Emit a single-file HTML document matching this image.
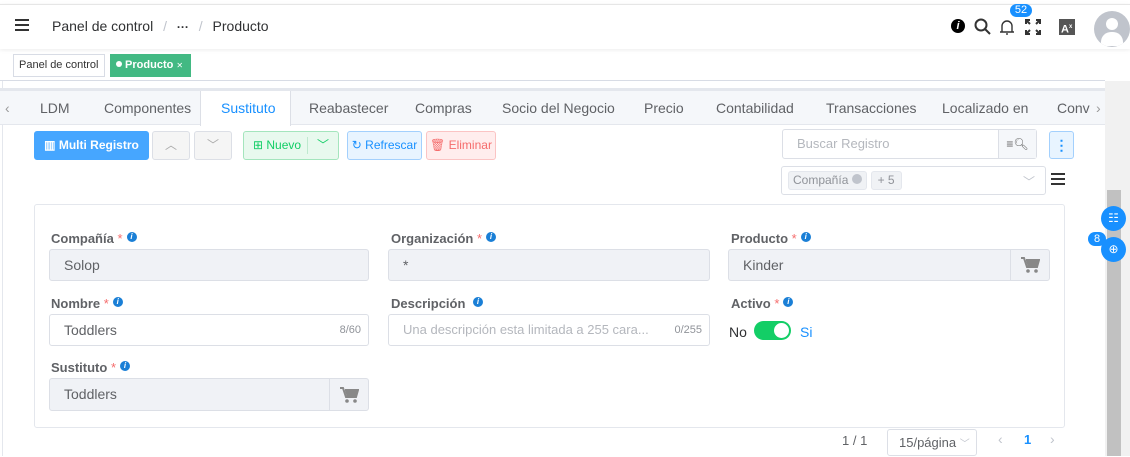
<!DOCTYPE html>
<html><head><meta charset="utf-8"><style>
*{box-sizing:border-box;margin:0;padding:0}
body{width:1130px;height:456px;overflow:hidden;background:#fff;font-family:"Liberation Sans",sans-serif;position:relative;color:#303133}
.a{position:absolute}
.hdr{top:4px;left:0;width:1130px;height:45px;border-top:1px solid #e6e6e6;box-shadow:0 1px 4px rgba(0,0,0,.08)}
.tag{height:23px;border:1px solid #d8dce5;font-size:12px;line-height:21px;padding:0 6px;white-space:nowrap;overflow:hidden}
.tabs{top:88px;left:0;width:1105px;height:37px;background:#f5f7fa;border-bottom:1px solid #e4e7ed;border-top:3px solid #e4e7ed}
.tab{position:absolute;top:0;height:34px;line-height:34px;font-size:14px;color:#606266;white-space:nowrap}
.btn{position:absolute;top:131px;height:29px;border-radius:3px;font-size:12px;line-height:27px;text-align:center;border:1px solid #dcdfe6}
.lbl{position:absolute;font-size:13px;font-weight:bold;color:#606266}
.lbl b{color:#f56c6c;font-weight:normal}
.inf{display:inline-block;width:10px;height:10px;border-radius:50%;background:#1a7fd6;color:#fff;font-size:8px;line-height:10px;text-align:center;font-style:italic;vertical-align:4px;margin-left:4px}
.inp{position:absolute;height:32px;border:1px solid #dcdfe6;border-radius:3px;font-size:14px;line-height:30px;padding-left:14px;color:#606266}
.dis{background:#f0f2f6}
.cart{position:absolute;right:0;top:0;width:39px;height:30px;border-left:1px solid #dcdfe6;display:flex;align-items:center;justify-content:center}
</style></head><body>
<div class="a hdr"></div>
<div class="a" style="left:15px;top:19px;width:14px;height:2px;background:#333;box-shadow:0 5px 0 #333,0 10px 0 #333"></div>
<div class="a" style="left:52px;top:18px;font-size:14px;color:#303133">Panel de control <span style="color:#c0c4cc;margin:0 6px">/</span> <b style="font-size:12px">···</b> <span style="color:#c0c4cc;margin:0 6px">/</span> Producto</div>
<div class="a" style="left:951px;top:19px;width:14px;height:14px;border-radius:50%;background:#000;color:#fff;font-size:11px;font-weight:bold;font-style:italic;text-align:center;line-height:14px">i</div>
<svg class="a" style="left:974px;top:18px" width="18" height="18"><circle cx="7" cy="7" r="5.5" fill="none" stroke="#333" stroke-width="2"/><path d="M11 11l5 5" stroke="#333" stroke-width="2"/></svg>
<svg class="a" style="left:999px;top:18px" width="16" height="18"><path d="M3 14V8a5 5 0 0110 0v6zM1 14h14M8 15v2" fill="none" stroke="#333" stroke-width="1.4"/></svg>
<div class="a" style="left:1010px;top:4px;width:22px;height:13px;border-radius:7px;background:#1890ff;color:#fff;font-size:11px;text-align:center;line-height:13px">52</div>
<svg class="a" style="left:1025px;top:19px" width="16" height="16"><path d="M1 5V1h4M11 1h4v4M15 11v4h-4M5 15H1v-4M1 1l4 4M15 1l-4 4M15 15l-4-4M1 15l4-4" fill="none" stroke="#333" stroke-width="2"/></svg>
<div class="a" style="left:1059px;top:19px;width:16px;height:16px;background:#555;color:#fff;font-size:11px;font-weight:bold;line-height:16px;padding-left:2px">A<sup style="font-size:6px">x</sup></div>
<div class="a" style="left:1094px;top:11px;width:36px;height:36px;border-radius:50%;background:#c0c4cc;overflow:hidden"><div class="a" style="left:12px;top:7px;width:12px;height:12px;border-radius:50%;background:#fff"></div><div class="a" style="left:7px;top:21px;width:22px;height:14px;border-radius:10px 10px 0 0;background:#fff"></div></div>
<div class="a tag" style="left:13px;top:54px;width:92px;color:#333;font-size:11px;padding:0 5px">Panel de control</div>
<div class="a tag" style="left:110px;top:54px;background:#42b983;border-color:#42b983;color:#fff;font-weight:bold;width:81px;font-size:11px;padding:0 5px"><span style="display:inline-block;width:6px;height:6px;border-radius:50%;background:#fff;vertical-align:1px"></span> Producto <span style="font-size:8px;font-weight:normal">✕</span></div>
<div class="a" style="top:80px;left:0;width:1105px;height:1px;background:#d8dce5"></div>
<div class="a" style="top:81px;left:2px;width:1px;height:375px;background:#e4e7ed"></div>
<div class="a tabs">
<span class="tab" style="left:5px;color:#999">‹</span>
<span class="tab" style="left:40px">LDM</span>
<span class="tab" style="left:104px">Componentes</span>
<span class="tab" style="left:200px;width:91px;background:#fff;border-left:1px solid #dcdfe6;border-right:1px solid #dcdfe6;height:35px;color:#1890ff;padding-left:20px">Sustituto</span>
<span class="tab" style="left:309px">Reabastecer</span>
<span class="tab" style="left:415px">Compras</span>
<span class="tab" style="left:502px">Socio del Negocio</span>
<span class="tab" style="left:644px">Precio</span>
<span class="tab" style="left:716px">Contabilidad</span>
<span class="tab" style="left:826px">Transacciones</span>
<span class="tab" style="left:942px">Localizado en</span>
<span class="tab" style="left:1057px;width:33px;overflow:hidden">Conve</span>
<span class="tab" style="left:1096px;color:#999">›</span>
</div>
<div class="btn" style="left:34px;width:115px;background:#46a6ff;border-color:#46a6ff;color:#fff;font-weight:bold">▥ Multi Registro</div>
<div class="btn" style="left:152px;width:38px;background:#f5f5f5;color:#aaa">︿</div>
<div class="btn" style="left:194px;width:38px;background:#f5f5f5;color:#aaa">﹀</div>
<div class="btn" style="left:243px;width:96px;background:#e8f9ee;border-color:#a4e5bd;color:#13ce66;text-align:left;padding-left:9px">⊞ Nuevo<span style="position:absolute;left:63px;top:5px;width:1px;height:17px;background:#bfe9cf"></span><span style="position:absolute;left:73px">﹀</span></div>
<div class="btn" style="left:347px;width:75px;background:#e8f4ff;border-color:#a3d0fd;color:#1890ff">↻ Refrescar</div>
<div class="btn" style="left:426px;width:70px;background:#ffeded;border-color:#fbc4c4;color:#f56c6c">🗑 Eliminar</div>
<div class="inp" style="left:782px;top:129px;width:255px;height:30px;font-size:13px;line-height:28px;color:#b4b7bd">Buscar Registro<div class="a" style="right:0;top:0;width:38px;height:28px;border-left:1px solid #dcdfe6;background:#f5f7fa;color:#666;text-align:center;font-size:12px">≡🔍︎</div></div>
<div class="a" style="left:1049px;top:131px;width:25px;height:28px;border:1px solid #a3d0fd;background:#e8f4ff;border-radius:3px;color:#1890ff;text-align:center;font-weight:bold;font-size:14px;line-height:26px">⋮</div>
<div class="inp" style="left:781px;top:166px;width:265px;height:29px;padding-left:6px">
<span style="display:inline-block;height:19px;margin-top:4px;vertical-align:top;background:#f0f2f5;border:1px solid #e4e7ed;border-radius:3px;font-size:12px;line-height:17px;padding:0 4px;color:#909399">Compañía <span style="display:inline-block;width:10px;height:10px;border-radius:50%;background:#c0c4cc"></span></span>
<span style="display:inline-block;height:19px;margin-top:4px;vertical-align:top;background:#f0f2f5;border:1px solid #e4e7ed;border-radius:3px;font-size:12px;line-height:17px;padding:0 6px;color:#909399">+ 5</span>
<span class="a" style="right:10px;top:0;color:#c0c4cc;font-size:12px">﹀</span></div>
<div class="a" style="left:1051px;top:173px;width:14px;height:2px;background:#333;box-shadow:0 5px 0 #333,0 10px 0 #333"></div>
<div class="a" style="left:34px;top:204px;width:1031px;height:224px;border:1px solid #e4e7ed;border-radius:3px"></div>
<div class="lbl" style="left:51px;top:231px">Compañía <b>*</b><span class="inf">i</span></div>
<div class="lbl" style="left:391px;top:231px">Organización <b>*</b><span class="inf">i</span></div>
<div class="lbl" style="left:731px;top:231px">Producto <b>*</b><span class="inf">i</span></div>
<div class="inp dis" style="left:49px;top:249px;width:320px">Solop</div>
<div class="inp dis" style="left:388px;top:249px;width:322px">*</div>
<div class="inp dis" style="left:728px;top:249px;width:322px">Kinder<div class="cart"><svg width="20" height="18"><path d="M1 2h3l3 9h10l2-7H6" fill="none" stroke="#888" stroke-width="2"/><path d="M6 5h13l-2 6H8z" fill="#888"/><circle cx="8" cy="15" r="1.8" fill="#888"/><circle cx="16" cy="15" r="1.8" fill="#888"/></svg></div></div>
<div class="lbl" style="left:51px;top:296px">Nombre <b>*</b><span class="inf">i</span></div>
<div class="lbl" style="left:391px;top:296px">Descripción <span class="inf">i</span></div>
<div class="lbl" style="left:731px;top:296px">Activo <b>*</b><span class="inf">i</span></div>
<div class="inp" style="left:49px;top:314px;width:320px">Toddlers<span class="a" style="right:7px;font-size:11px;color:#909399">8/60</span></div>
<div class="inp" style="left:388px;top:314px;width:322px;color:#b4b7bd;font-size:13px">Una descripción esta limitada a 255 cara...<span class="a" style="right:7px;font-size:11px;color:#909399">0/255</span></div>
<div class="a" style="left:729px;top:324px;font-size:14px">No</div>
<div class="a" style="left:754px;top:321px;width:37px;height:19px;border-radius:10px;background:#13ce66"><div class="a" style="right:2px;top:2px;width:15px;height:15px;border-radius:50%;background:#fff"></div></div>
<div class="a" style="left:800px;top:324px;font-size:14px;color:#1890ff">Si</div>
<div class="lbl" style="left:51px;top:360px">Sustituto <b>*</b><span class="inf">i</span></div>
<div class="inp dis" style="left:49px;top:378px;width:320px;height:33px">Toddlers<div class="cart" style="height:31px"><svg width="20" height="18"><path d="M1 2h3l3 9h10l2-7H6" fill="none" stroke="#888" stroke-width="2"/><path d="M6 5h13l-2 6H8z" fill="#888"/><circle cx="8" cy="15" r="1.8" fill="#888"/><circle cx="16" cy="15" r="1.8" fill="#888"/></svg></div></div>
<div class="a" style="left:842px;top:433px;font-size:13px;color:#606266">1 / 1</div>
<div class="a" style="left:887px;top:429px;width:90px;height:27px;border:1px solid #dcdfe6;border-radius:3px;font-size:13px;line-height:25px;padding-left:11px;color:#606266">15/página <span style="color:#c0c4cc;font-size:10px">﹀</span></div>
<div class="a" style="left:998px;top:431px;color:#c0c4cc;font-size:14px">‹</div>
<div class="a" style="left:1024px;top:432px;color:#1890ff;font-size:13px;font-weight:bold">1</div>
<div class="a" style="left:1050px;top:431px;color:#c0c4cc;font-size:14px">›</div>
<div class="a" style="left:1105px;top:81px;width:25px;height:375px;background:#f1f1f1"></div>
<div class="a" style="left:1107px;top:190px;width:14px;height:266px;background:#c1c1c1"></div>
<div class="a" style="left:1101px;top:206px;width:25px;height:25px;border-radius:50%;background:#1890ff;color:#fff;font-size:12px;text-align:center;line-height:25px">☷</div>
<div class="a" style="left:1101px;top:237px;width:25px;height:25px;border-radius:50%;background:#1890ff;color:#fff;font-size:12px;text-align:center;line-height:25px">⊕</div>
<div class="a" style="left:1088px;top:232px;width:18px;height:14px;border-radius:7px;background:#1890ff;color:#fff;font-size:11px;text-align:center;line-height:14px">8</div>
</body></html>
